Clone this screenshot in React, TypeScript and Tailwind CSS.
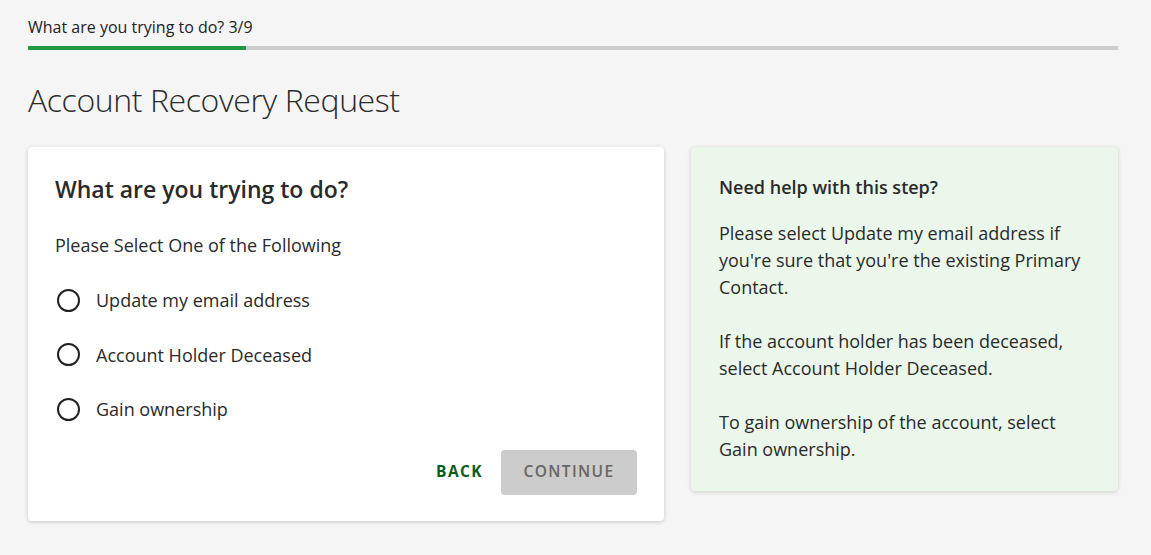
import * as React from "react"

const options = [
    "Update my email address",
    "Account Holder Deceased",
    "Gain ownership",
]

export default function App() {
    const [selected, setSelected] = React.useState<string | null>(null)

    return (
        <div className="min-h-[555px] bg-[#f5f5f5] px-[28px] pt-[16px] text-[#333] [font-family:'Open_Sans',sans-serif]">
            {/* progress */}
            <div className="pr-[5px]">
                <div className="text-[16px] leading-[22px] text-[#222]">What are you trying to do? 3/9</div>
                <div className="mt-[8px] flex h-[4px] w-full bg-[#cccccc]">
                    <div className="h-full w-[20%] bg-[#1f9a40]" />
                </div>
            </div>

            <h1 className="mt-[28px] text-[32px] leading-[44px] font-light tracking-[-0.4px] text-[#2a2a2a]">
                Account Recovery Request
            </h1>

            <div className="mt-[25px] flex items-start gap-[27px] pr-[5px]">
                {/* question card */}
                <div className="w-[636px] rounded-[4px] bg-white px-[27px] pt-[27px] pb-[26.5px] shadow-[0_1px_4px_rgba(0,0,0,0.18)]">
                    <h2 className="text-[23px] leading-[30px] font-semibold text-[#2a2a2a]">What are you trying to do?</h2>
                    <p className="mt-[29px] text-[18px] leading-[24px] text-[#2a2a2a]">Please Select One of the Following</p>
                    <div className="mt-[28px] flex flex-col gap-[24.5px]">
                        {options.map((opt) => (
                            <label key={opt} className="flex cursor-pointer items-center gap-[16px] pl-[2px]" onClick={() => setSelected(opt)}>
                                <span className="flex h-[23px] w-[23px] items-center justify-center rounded-full border-2 border-[#222]">
                                    {selected === opt && <span className="h-[11px] w-[11px] rounded-full bg-[#1f9a40]" />}
                                </span>
                                <span className="text-[18px] leading-[30px] text-[#2a2a2a]">{opt}</span>
                            </label>
                        ))}
                    </div>
                    <div className="mt-[25.5px] flex items-center justify-end gap-[18px]">
                        <button className="text-[15.5px] font-bold tracking-[1.4px] text-[#0d5c1b]">BACK</button>
                        <button
                            disabled={!selected}
                            className="h-[45px] w-[136px] rounded-[4px] bg-[#cccccc] text-[15.5px] font-semibold tracking-[1.4px] text-[#666]"
                        >
                            CONTINUE
                        </button>
                    </div>
                </div>

                {/* help card */}
                <div className="flex-1 rounded-[4px] bg-[#eaf7ea] px-[28px] pt-[28px] pb-[28px] shadow-[0_1px_4px_rgba(0,0,0,0.16)]">
                    <h3 className="text-[18px] leading-[24px] font-semibold text-[#2a2a2a]">Need help with this step?</h3>
                    <div className="mt-[20.5px] space-y-[27px] text-[18px] leading-[27px] text-[#2a2a2a]">
                        <p>Please select Update my email address if you're sure that you're the existing Primary Contact.</p>
                        <p>If the account holder has been deceased, select Account Holder Deceased.</p>
                        <p>To gain ownership of the account, select Gain ownership.</p>
                    </div>
                </div>
            </div>
        </div>
    )
}
